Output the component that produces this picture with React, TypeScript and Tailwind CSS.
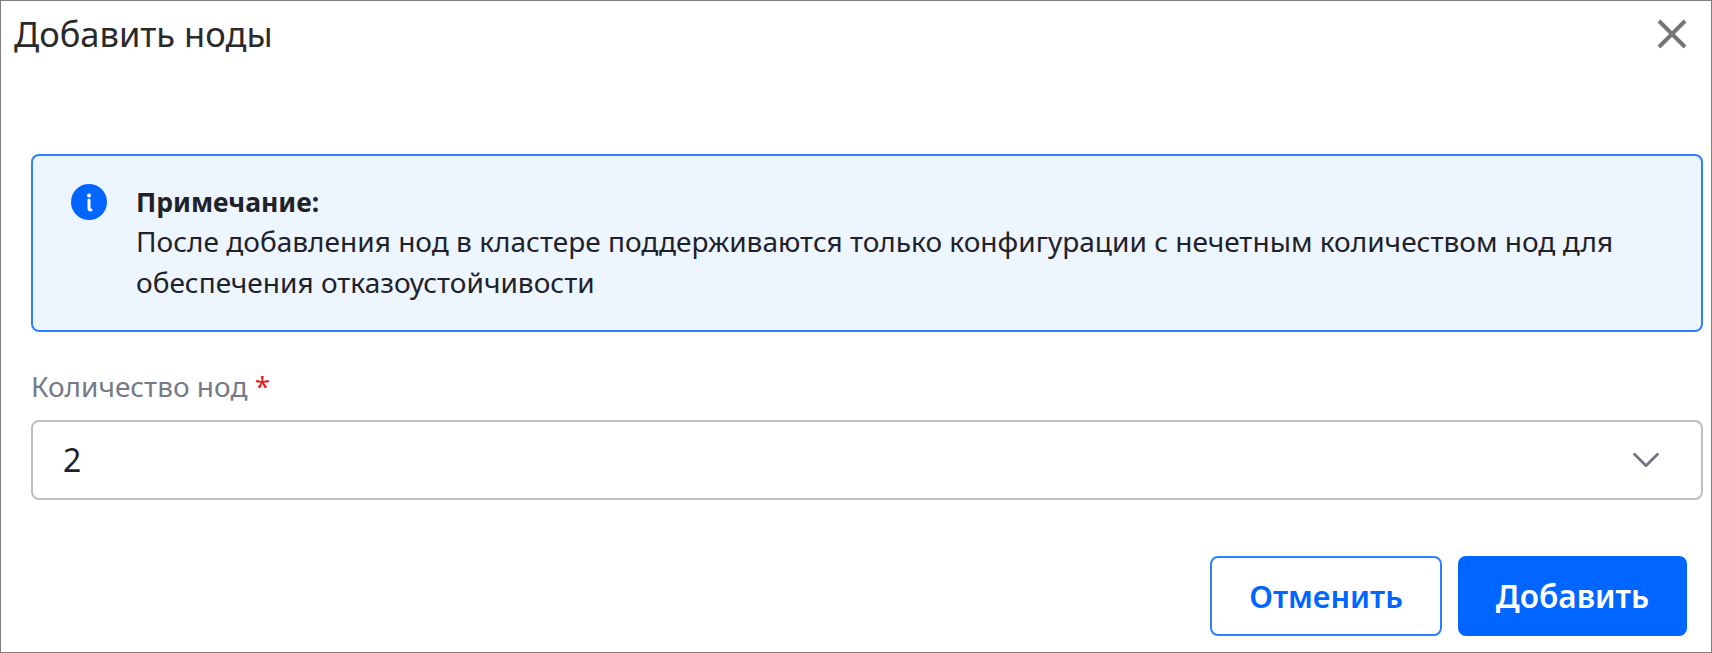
import { ChevronDown } from "lucide-react";

export default function App() {
  return (
    <div className="w-[1712px] h-[653px] bg-white border border-[#808080] flex flex-col font-['Noto_Sans',sans-serif] text-[#1f2228]">
      {/* Header */}
      <div className="flex items-center justify-between h-[68px] pl-[13px] pr-[21px]">
        <h1 className="text-[34.5px] leading-[44px] font-normal text-[#2a2a2a] -mt-[2px]">Добавить ноды</h1>
        <button className="text-[#757575]">
          <svg width="36" height="36" viewBox="0 0 36 36" fill="none" stroke="currentColor" strokeWidth="4">
            <path d="M5 4 L31 30 M31 4 L5 30" />
          </svg>
        </button>
      </div>

      {/* Note */}
      <div className="mt-[85px] ml-[30px] mr-[8px] h-[178px] rounded-[8px] border-2 border-[#2e80ff] bg-[#edf5ff] flex pl-[38px] pt-[28px]">
        <div className="w-[36px] h-[36px] rounded-full bg-[#0066ff] flex items-center justify-center shrink-0">
          <svg width="36" height="36" viewBox="0 0 36 36" fill="none">
            <circle cx="18" cy="11.5" r="2" fill="white" />
            <path d="M18 16 V24 Q18 26 20 26" stroke="white" strokeWidth="3" strokeLinecap="round" />
          </svg>
        </div>
        <div className="ml-[29px] text-[28.05px] leading-[41px] -mt-[1px]">
          <div className="font-bold text-[26.5px] leading-[38px]">Примечание:</div>
          <div className="w-[1500px]">
            После добавления нод в кластере поддерживаются только конфигурации с нечетным количеством нод для обеспечения отказоустойчивости
          </div>
        </div>
      </div>

      {/* Field */}
      <div className="mt-[36px] ml-[30px] mr-[8px]">
        <div className="text-[28px] leading-[36px] text-[#757a85]">
          Количество нод <span className="text-[#e01f1f]">*</span>
        </div>
        <div className="mt-[16px] h-[80px] rounded-[8px] border-2 border-[#bcbec4] flex items-center justify-between pl-[30px] pr-[32px]">
          <span className="text-[32px]">2</span>
          <ChevronDown className="w-[46px] h-[46px] text-[#6f7480]" strokeWidth={1.4} />
        </div>
      </div>

      {/* Actions */}
      <div className="mt-[56px] flex justify-end gap-[16px] pr-[24px]">
        <button className="w-[232px] h-[80px] rounded-[8px] border-2 border-[#2e80ff] text-[#0066ff] text-[30.7px] font-semibold">
          Отменить
        </button>
        <button className="w-[229px] h-[80px] rounded-[8px] bg-[#0066ff] text-white text-[31.5px] font-semibold">
          Добавить
        </button>
      </div>
    </div>
  );
}
